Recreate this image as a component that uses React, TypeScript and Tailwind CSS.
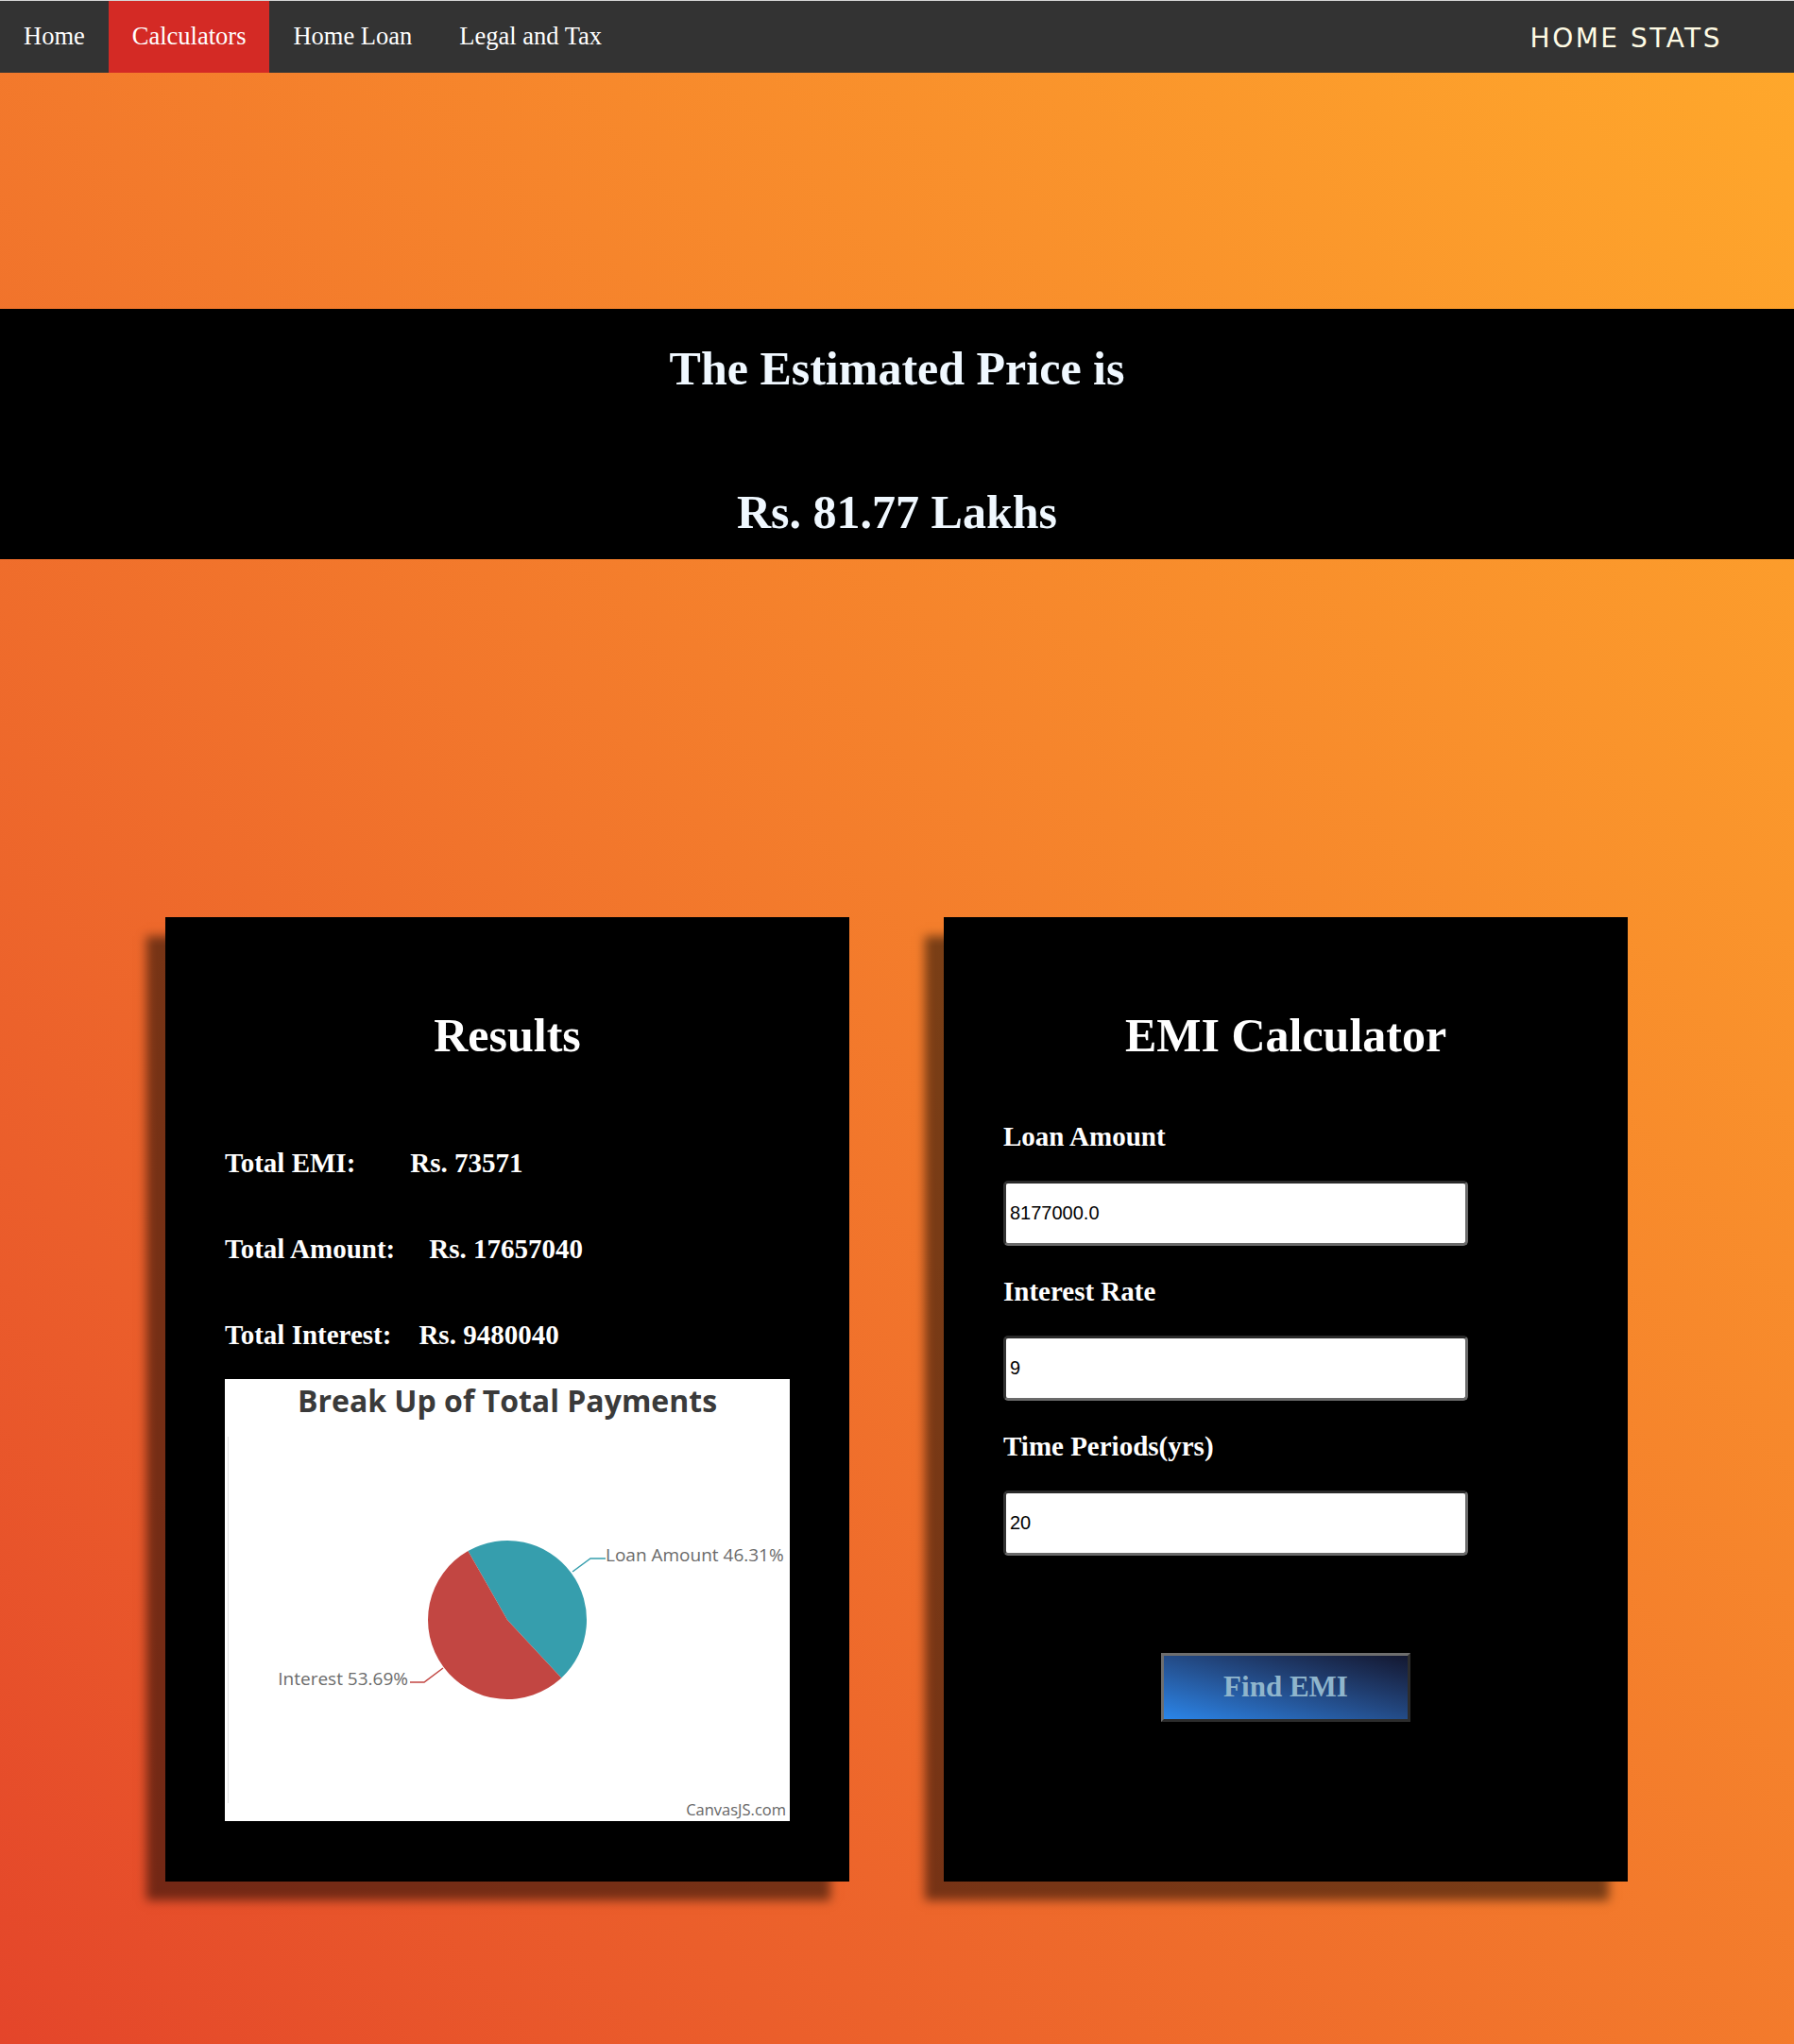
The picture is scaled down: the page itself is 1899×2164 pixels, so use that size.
import React from "react";

const serif = "font-['Liberation_Serif','Times_New_Roman',serif]";

const navLinks = ["Home", "Calculators", "Home Loan", "Legal and Tax"];

const PieChart: React.FC = () => {
  // centre and radius, in chart coordinates
  const cx = 299;
  const cy = 255;
  const r = 84;
  const pt = (deg: number) => {
    const a = (deg * Math.PI) / 180;
    return `${(cx + r * Math.cos(a)).toFixed(1)} ${(cy + r * Math.sin(a)).toFixed(1)}`;
  };
  const start = 240.3;
  const end = 47;

  return (
    <svg width="598" height="468" viewBox="0 0 598 468" className="block">
      <rect x="0" y="0" width="598" height="468" fill="#ffffff" />
      <line x1="3.5" y1="61" x2="3.5" y2="449" stroke="#e2e2e2" strokeWidth="1" />
      <text
        x="299"
        y="35"
        textAnchor="middle"
        fontFamily="'Open Sans', sans-serif"
        fontWeight="700"
        fontSize="32"
        fill="#3a3a3a"
      >
        Break Up of Total Payments
      </text>

      {/* Loan Amount slice */}
      <path d={`M ${cx} ${cy} L ${pt(start)} A ${r} ${r} 0 0 1 ${pt(end)} Z`} fill="#369EAD" />
      {/* Interest slice */}
      <path d={`M ${cx} ${cy} L ${pt(end)} A ${r} ${r} 0 1 1 ${pt(start)} Z`} fill="#C24642" />

      <polyline points="368,204 387,190 403,190" fill="none" stroke="#369EAD" strokeWidth="1.5" />
      <polyline points="231,306 211,321 196,321" fill="none" stroke="#C24642" strokeWidth="1.5" />

      <text x="403" y="193" fontFamily="'Open Sans', sans-serif" fontSize="19" fill="#6b6b6b">
        Loan Amount 46.31%
      </text>
      <text
        x="194"
        y="324"
        textAnchor="end"
        fontFamily="'Open Sans', sans-serif"
        fontSize="19"
        fill="#6b6b6b"
      >
        Interest 53.69%
      </text>
      <text
        x="594"
        y="462"
        textAnchor="end"
        fontFamily="'Open Sans', sans-serif"
        fontSize="16.5"
        fill="#666666"
      >
        CanvasJS.com
      </text>
    </svg>
  );
};

const Field: React.FC<{ label: string; value: string }> = ({ label, value }) => (
  <div className="flex flex-col">
    <label className="block text-[29px] leading-[29px] font-bold text-white mb-[32px]">{label}</label>
    <input
      type="text"
      defaultValue={value}
      className="w-[492px] h-[69px] mb-[34px] rounded-[5px] border-[3px] border-t-[#2a2a2a] border-l-[#333333] border-r-[#6a6a6a] border-b-[#6a6a6a] bg-white pl-[4px] text-[20px] text-black font-['Liberation_Sans',Arial,sans-serif] outline-none"
    />
  </div>
);

const App: React.FC = () => {
  return (
    <div className="min-h-[2164px] w-full bg-gradient-to-tr from-[#e4452a] to-[#ffa92b]">
      {/* Navbar */}
      <nav className="h-[77px] border-t border-[#d6d6d6] bg-[#333333] flex items-stretch justify-between">
        <ul className={`flex ${serif}`}>
          {navLinks.map((link) => (
            <li
              key={link}
              className={`flex items-center px-[25px] text-[26.5px] text-white ${
                link === "Calculators" ? "bg-[#d42a25]" : ""
              }`}
            >
              {link}
            </li>
          ))}
        </ul>
        <div className="flex items-center pr-[76px] pt-[3px] text-[28px] tracking-[2.5px] text-[#fffbe4] font-['DejaVu_Sans',sans-serif]">
          HOME STATS
        </div>
      </nav>

      {/* Estimated price */}
      <div className="mt-[250px] bg-black pt-[38px] pb-[25px] text-center">
        <h1 className={`${serif} text-[50px] leading-[50px] font-bold text-[#f0f8ff]`}>The Estimated Price is</h1>
        <h1 className={`${serif} mt-[102px] text-[50px] leading-[50px] font-bold text-[#f0f8ff]`}>
          Rs. 81.77 Lakhs
        </h1>
      </div>

      {/* Cards */}
      <div className={`mt-[379px] flex gap-[100px] px-[175px] pb-[172px] ${serif}`}>
        {/* Results */}
        <div className="w-[724px] h-[1021px] bg-black px-[63px] pt-[100px] shadow-[-20px_20px_10px_rgba(0,0,0,0.5)]">
          <h2 className="text-center text-[50px] leading-[50px] font-bold text-white">Results</h2>
          <div className="mt-[96px] flex flex-col gap-[62px] text-[29px] leading-[29px] font-bold text-white">
            <p>
              Total EMI:<span className="ml-[58px]">Rs. 73571</span>
            </p>
            <p>
              Total Amount:<span className="ml-[36px]">Rs. 17657040</span>
            </p>
            <p>
              Total Interest:<span className="ml-[29px]">Rs. 9480040</span>
            </p>
          </div>
          <div className="mt-[32px]">
            <PieChart />
          </div>
        </div>

        {/* EMI Calculator */}
        <div className="w-[724px] h-[1021px] bg-black px-[63px] pt-[100px] shadow-[-20px_20px_10px_rgba(0,0,0,0.5)]">
          <h2 className="text-center text-[50px] leading-[50px] font-bold text-white">EMI Calculator</h2>
          <div className="mt-[68px]">
            <Field label="Loan Amount" value="8177000.0" />
            <Field label="Interest Rate" value="9" />
            <Field label="Time Periods(yrs)" value="20" />
          </div>
          <div className="flex justify-center mt-[69px]">
            <button className="w-[264px] h-[73px] border-[3px] border-t-[#6e6e6e] border-l-[#6e6e6e] border-r-[#2c2c2c] border-b-[#2c2c2c] bg-gradient-to-tr from-[#2a86ea] to-[#131831] text-[31px] font-bold text-[#8fb5cc]">
              Find EMI
            </button>
          </div>
        </div>
      </div>
    </div>
  );
};

export default App;
